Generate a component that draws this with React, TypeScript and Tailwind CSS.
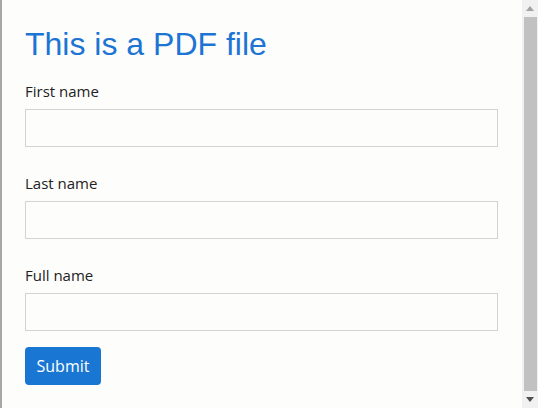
export default function App() {
  const fields = ["First name", "Last name", "Full name"];

  return (
    <div className="flex h-[408px] w-[538px] overflow-hidden border-l-2 border-[#a7a7a7] bg-[#fdfdfc]">
      <div className="flex-1 pl-[23px] pr-[24px] pt-[26px]">
        <h1 className="font-['Liberation_Sans',Arial,sans-serif] text-[32px] leading-[37px] text-[#1c74d4]">
          This is a PDF file
        </h1>
        <form className="mt-[17px] font-['Open_Sans',sans-serif]">
          {fields.map((f) => (
            <div key={f} className="mb-[25px]">
              <label className="block text-[15px] leading-[22px] text-[#222]">{f}</label>
              <input
                type="text"
                className="mt-[7px] block h-[38px] w-full border border-[#d3d3d3] bg-[#fdfdfc]"
              />
            </div>
          ))}
          <button
            type="button"
            className="-mt-[9px] block h-[38px] w-[76px] rounded-[4px] bg-[#1a76d3] text-[16px] text-white"
          >
            Submit
          </button>
        </form>
      </div>

      <div className="flex w-[16px] flex-col items-center bg-[#f1f1f1]">
        <div className="flex h-[17px] items-center justify-center">
          <svg width="8" height="5" viewBox="0 0 8 5">
            <path d="M0 5 L4 0 L8 5 Z" fill="#a3a3a3" />
          </svg>
        </div>
        <div className="w-[13px] flex-1 bg-[#c1c1c1]" />
        <div className="flex h-[17px] items-center justify-center">
          <svg width="8" height="5" viewBox="0 0 8 5">
            <path d="M0 0 L8 0 L4 5 Z" fill="#505050" />
          </svg>
        </div>
      </div>
    </div>
  );
}
